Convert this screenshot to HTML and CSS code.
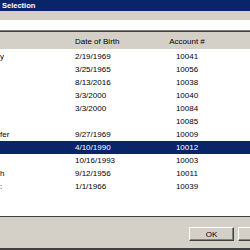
FILE: index.html
```html
<!DOCTYPE html>
<html>
<head>
<meta charset="utf-8">
<link rel="stylesheet" href="styles.css">
</head>
<body>
<div class="dialog">
  <div class="titlebar">Selection</div>
  <div class="strip"></div>
  <div class="search"></div>
  <div class="list">
    <div class="header">
      <span class="c-name"></span>
      <span class="c-dob">Date of Birth</span>
      <span class="c-acct">Account #</span>
    </div>
    <div class="rows">
      <div class="row"><span class="c-name">y</span><span class="c-dob">2/19/1969</span><span class="c-acct">10041</span></div>
      <div class="row"><span class="c-name"></span><span class="c-dob">3/25/1965</span><span class="c-acct">10056</span></div>
      <div class="row"><span class="c-name"></span><span class="c-dob">8/13/2016</span><span class="c-acct">10038</span></div>
      <div class="row"><span class="c-name"></span><span class="c-dob">3/3/2000</span><span class="c-acct">10040</span></div>
      <div class="row"><span class="c-name"></span><span class="c-dob">3/3/2000</span><span class="c-acct">10084</span></div>
      <div class="row"><span class="c-name"></span><span class="c-dob"></span><span class="c-acct">10085</span></div>
      <div class="row"><span class="c-name">fer</span><span class="c-dob">9/27/1969</span><span class="c-acct">10009</span></div>
      <div class="row selected"><span class="c-name"></span><span class="c-dob">4/10/1990</span><span class="c-acct">10012</span></div>
      <div class="row"><span class="c-name"></span><span class="c-dob">10/16/1993</span><span class="c-acct">10003</span></div>
      <div class="row"><span class="c-name">h</span><span class="c-dob">9/12/1956</span><span class="c-acct">10011</span></div>
      <div class="row"><span class="c-name">:</span><span class="c-dob">1/1/1966</span><span class="c-acct">10039</span></div>
    </div>
  </div>
  <div class="footer">
    <button class="btn">OK</button>
    <button class="btn btn-cut"></button>
  </div>
</div>
</body>
</html>
```
FILE: styles.css
```css
html, body {
  margin: 0;
  padding: 0;
  background: #d4d0c8;
}
body {
  width: 250px;
  height: 250px;
  overflow: hidden;
  font-family: "Liberation Sans", "DejaVu Sans", sans-serif;
  font-size: 8px;
  color: #000;
}
.dialog {
  display: flex;
  flex-direction: column;
  height: 250px;
}
.titlebar {
  height: 11px;
  background: #0a246a;
  color: #fff;
  font-weight: bold;
  font-size: 7.5px;
  line-height: 12px;
  padding-left: 2px;
}
.strip {
  height: 9px;
  background: #d4d0c8;
}
.search {
  height: 10px;
  background: #fff;
  border-bottom: 1px solid #808080;
}
.list {
  display: flex;
  flex-direction: column;
  flex: 1;
  background: #fff;
  border-top: 1px solid #404040;
  border-bottom: 1px solid #404040;
}
.header {
  display: flex;
  height: 18px;
  background: #d4d0c8;
  align-items: flex-end;
  padding-bottom: 3px;
  box-sizing: border-box;
  border-bottom: 1px solid #fff;
}
.rows {
  display: flex;
  flex-direction: column;
}
.row {
  display: flex;
  height: 13px;
  align-items: center;
}
.row.selected {
  background: #0a246a;
  color: #fff;
}
.c-name {
  width: 75px;
}
.c-dob {
  width: 87px;
}
.c-acct {
  width: 50px;
  text-align: center;
}
.footer {
  height: 33px;
  display: flex;
  justify-content: flex-end;
  align-items: flex-start;
  padding-top: 10px;
  box-sizing: border-box;
  gap: 4px;
  border-bottom: 2px solid #404040;
}
.btn {
  width: 45px;
  height: 14px;
  margin: 0;
  padding: 0;
  background: #d4d0c8;
  font-family: "Liberation Sans", sans-serif;
  font-size: 8px;
  color: #000;
  border: 1px solid;
  border-color: #fff #404040 #404040 #fff;
  box-shadow: inset -1px -1px 0 #808080;
}
.btn-cut {
  width: 12px;
  border-right: none;
  box-shadow: inset 0 -1px 0 #808080;
}
```
